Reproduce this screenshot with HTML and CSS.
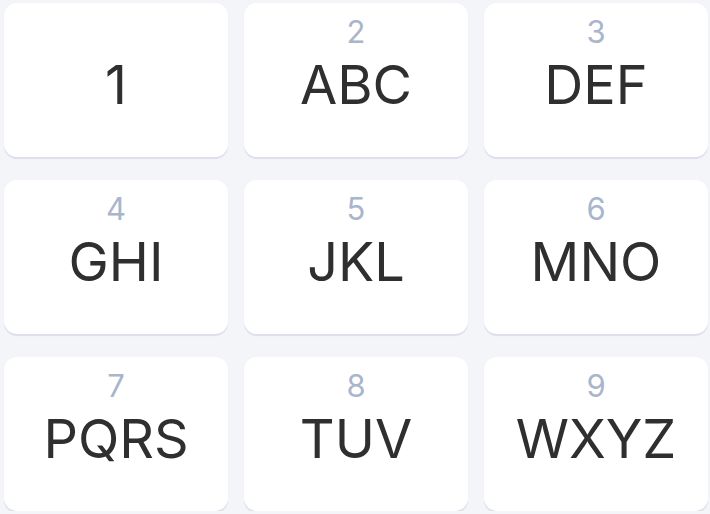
FILE: index.html
```html
<!DOCTYPE html>
<html>
<head>
<meta charset="utf-8">
<link rel="stylesheet" href="styles.css">
</head>
<body>
<div class="pad">
  <div class="key"><span class="sub"></span><span class="main">1</span></div>
  <div class="key"><span class="sub">2</span><span class="main">ABC</span></div>
  <div class="key"><span class="sub">3</span><span class="main">DEF</span></div>
  <div class="key"><span class="sub">4</span><span class="main">GHI</span></div>
  <div class="key"><span class="sub">5</span><span class="main">JKL</span></div>
  <div class="key"><span class="sub">6</span><span class="main">MNO</span></div>
  <div class="key"><span class="sub">7</span><span class="main">PQRS</span></div>
  <div class="key"><span class="sub">8</span><span class="main">TUV</span></div>
  <div class="key"><span class="sub">9</span><span class="main">WXYZ</span></div>
</div>
</body>
</html>
```
FILE: styles.css
```css
html, body {
  margin: 0;
  padding: 0;
  background: #f4f5f9;
  font-family: Inter, Roboto, "Liberation Sans", sans-serif;
}
.pad {
  display: grid;
  grid-template-columns: repeat(3, 224px);
  grid-auto-rows: 154px;
  column-gap: 16px;
  row-gap: 23px;
  padding: 3px 0 0 4px;
}
.key {
  background: #ffffff;
  border-radius: 13px;
  box-shadow: 0 2px 1px #dcdeec;
  display: flex;
  flex-direction: column;
  align-items: center;
  padding-top: 14px;
  box-sizing: border-box;
}
.sub {
  font-size: 31px;
  line-height: 30px;
  height: 30px;
  color: #a9b5cb;
}
.main {
  margin-top: 11px;
  font-size: 54px;
  line-height: 54px;
  color: #2f2f2f;
}
```
